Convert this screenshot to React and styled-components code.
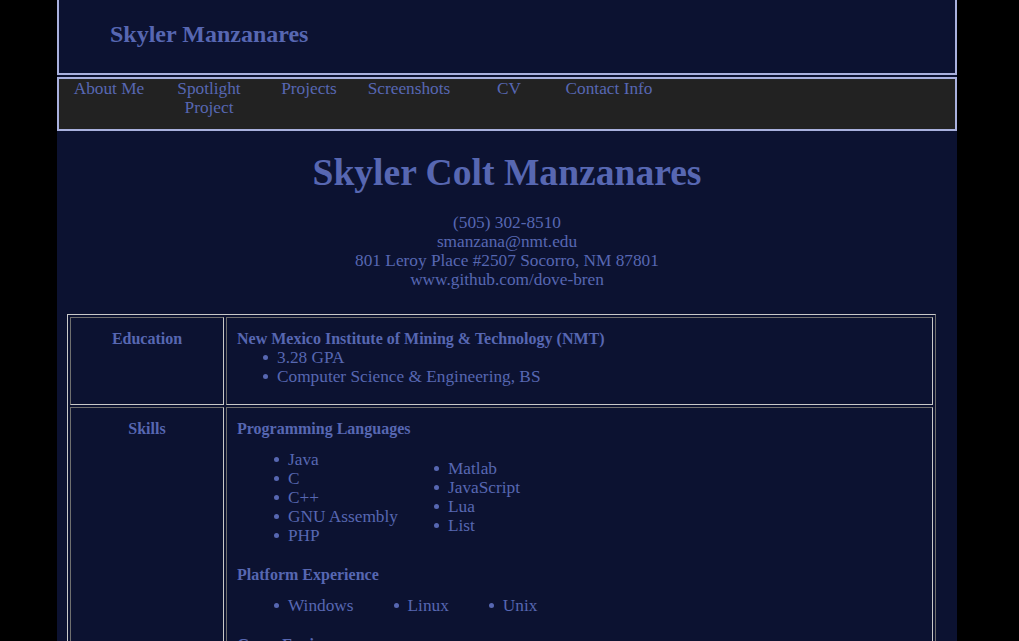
import React from 'react'
import styled, { createGlobalStyle } from 'styled-components'

const GlobalStyle = createGlobalStyle`
  html, body {
    margin: 0;
    padding: 0;
    background: #000000;
  }
  body {
    padding-right: 5px;
    font-family: "Liberation Serif", "Times New Roman", serif;
    font-size: 17.3px;
    line-height: 19px;
    color: #5767b2;
  }
`

const Page = styled.div`
  width: 900px;
  margin: 0 auto;
  min-height: 100vh;
  background: #0c1231;
`

const Header = styled.header`
  box-sizing: border-box;
  height: 75px;
  display: flex;
  align-items: center;
  padding: 0 0 6px 51px;
  border: 2px solid #a9b1de;
  border-top: none;
`

const SiteName = styled.h2`
  margin: 0;
  font-size: 24px;
  font-weight: bold;
  line-height: 30px;
`

const Nav = styled.nav`
  box-sizing: border-box;
  height: 54px;
  margin-top: 2px;
  display: flex;
  background: #222222;
  border: 2px solid #a9b1de;
`

const NavItem = styled.a`
  width: 100px;
  text-align: center;
  color: #5767b2;
  text-decoration: none;
  cursor: pointer;
`

const Title = styled.h1`
  margin: 22px 0 20px;
  text-align: center;
  font-size: 37.6px;
  line-height: 40px;
  font-weight: bold;
`

const Contact = styled.div`
  text-align: center;
  display: flex;
  flex-direction: column;
`

const Resume = styled.div`
  box-sizing: border-box;
  width: 869px;
  margin: 25px 0 0 10px;
  padding: 2px;
  display: grid;
  grid-template-columns: 154px 1fr;
  gap: 2px;
  border: 1px solid;
  border-color: #c9c9c9 #6f6f6f #6f6f6f #c9c9c9;
`

const Cell = styled.div`
  padding: 11px 10px ${p => p.$extra || 10}px;
  border: 1px solid;
  border-color: #6f6f6f #c9c9c9 #c9c9c9 #6f6f6f;
`

const Label = styled(Cell)`
  text-align: center;
  font-weight: bold;
  font-size: 16px;
`

const Heading = styled.div`
  font-weight: bold;
  font-size: 16px;
`

const List = styled.ul`
  list-style: none;
  margin: ${p => p.$margin || '0'};
  padding: 0 0 0 ${p => p.$indent || 26}px;
  display: flex;
  flex-direction: ${p => (p.$row ? 'row' : 'column')};
  gap: ${p => (p.$row ? '40px' : '0')};
`

const Item = styled.li`
  white-space: nowrap;
  &::before {
    content: '';
    display: inline-block;
    width: 5px;
    height: 5px;
    border-radius: 50%;
    background: #5767b2;
    margin-right: 9px;
    vertical-align: 3px;
  }
`

const Columns = styled.div`
  display: flex;
  align-items: flex-start;
  margin: 12px 0 20px;
  padding-left: 37px;
`

const Column = styled.ul`
  list-style: none;
  margin: ${p => p.$offset || 0}px 0 0;
  padding: 0;
  width: ${p => p.$width || 'auto'};
`

const languagesA = ['Java', 'C', 'C++', 'GNU Assembly', 'PHP']
const languagesB = ['Matlab', 'JavaScript', 'Lua', 'List']
const platforms = ['Windows', 'Linux', 'Unix']
const engines = ['Unity', 'Godot']

export default function App() {
  return (
    <>
      <GlobalStyle />
      <Page>
        <Header>
          <SiteName>Skyler Manzanares</SiteName>
        </Header>
        <Nav>
          <NavItem>About Me</NavItem>
          <NavItem>Spotlight Project</NavItem>
          <NavItem>Projects</NavItem>
          <NavItem>Screenshots</NavItem>
          <NavItem>CV</NavItem>
          <NavItem>Contact Info</NavItem>
        </Nav>

        <Title>Skyler Colt Manzanares</Title>
        <Contact>
          <span>(505) 302-8510</span>
          <span>smanzana@nmt.edu</span>
          <span>801 Leroy Place #2507 Socorro, NM 87801</span>
          <span>www.github.com/dove-bren</span>
        </Contact>

        <Resume>
          <Label $extra={18}>Education</Label>
          <Cell $extra={18}>
            <Heading>New Mexico Institute of Mining &amp; Technology (NMT)</Heading>
            <List $indent={26}>
              <Item>3.28 GPA</Item>
              <Item>Computer Science &amp; Engineering, BS</Item>
            </List>
          </Cell>

          <Label>Skills</Label>
          <Cell>
            <Heading>Programming Languages</Heading>
            <Columns>
              <Column $width="160px">
                {languagesA.map(l => <Item key={l}>{l}</Item>)}
              </Column>
              <Column $offset={9}>
                {languagesB.map(l => <Item key={l}>{l}</Item>)}
              </Column>
            </Columns>
            <Heading>Platform Experience</Heading>
            <List $row $indent={37} $margin="12px 0 20px">
              {platforms.map(p => <Item key={p}>{p}</Item>)}
            </List>
            <Heading>Game Engines</Heading>
            <List $row $indent={37} $margin="12px 0 20px">
              {engines.map(p => <Item key={p}>{p}</Item>)}
            </List>
          </Cell>
        </Resume>
      </Page>
    </>
  )
}
